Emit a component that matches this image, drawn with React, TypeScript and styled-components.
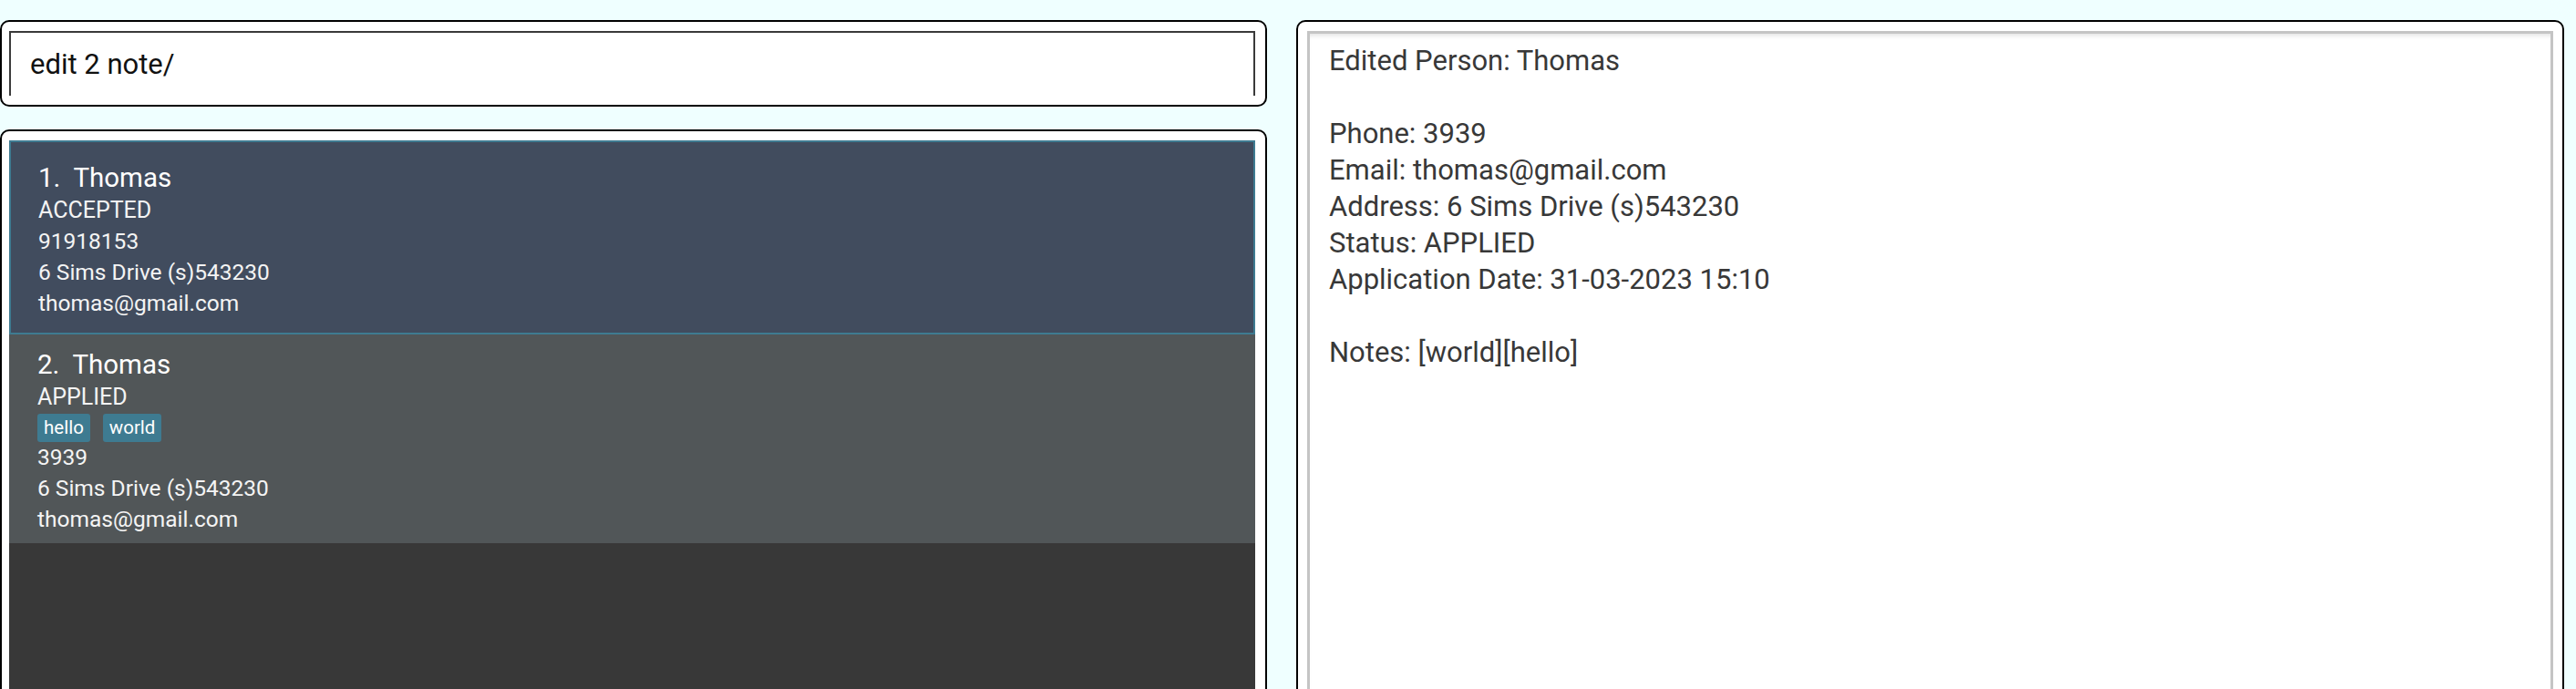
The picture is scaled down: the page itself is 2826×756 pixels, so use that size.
import React from "react";
import styled, { createGlobalStyle } from "styled-components";

const GlobalStyle = createGlobalStyle`
  html {
    overflow: hidden;
    background: #efffff;
  }
  body {
    margin: 0;
    padding: 0;
    background: #efffff;
    font-family: Roboto, "Liberation Sans", sans-serif;
  }
`;

const Page = styled.div`
  display: grid;
  grid-template-columns: 1390px 1391px;
  column-gap: 32px;
  align-items: start;
  padding-top: 22px;
`;

const LeftColumn = styled.div`
  display: flex;
  flex-direction: column;
  gap: 25px;
`;

const Frame = styled.div`
  background: #ffffff;
  border: 2px solid #000000;
  border-radius: 10px;
  padding: 10px 11px 10px 8px;
  box-sizing: border-box;
  display: flex;
  flex-direction: column;
  flex: none;
`;

const CommandFrame = styled(Frame)`
  height: 95px;
`;

const ListFrame = styled(Frame)`
  height: 700px;
`;

const ResultFrame = styled(Frame)`
  padding: 10px 10px 0 10px;
  height: 780px;
`;

const CommandField = styled.div`
  flex: 1;
  border: 2px solid #3a3a3a;
  border-bottom: none;
  display: flex;
  align-items: center;
  padding-left: 21px;
  font-size: 31px;
  color: #111111;
`;

const List = styled.div`
  flex: 1;
  background: #383838;
  display: flex;
  flex-direction: column;
`;

const Card = styled.div<{ $selected?: boolean; $tone: string }>`
  min-height: 213px;
  box-sizing: border-box;
  padding: 15px 0 9px ${(p) => (p.$selected ? 30 : 31)}px;
  background: ${(p) => p.$tone};
  border: ${(p) => (p.$selected ? "2px solid #3e7b91" : "none")};
  display: flex;
  flex-direction: column;
  justify-content: center;
  color: #ffffff;
`;

const Name = styled.div`
  font-size: 29.5px;
  line-height: 36px;
  white-space: pre;
`;

const Status = styled.div`
  font-size: 25px;
  line-height: 35px;
  color: #f4f4f4;
`;

const Detail = styled.div`
  font-size: 24.5px;
  line-height: 34px;
  color: #f4f4f4;
`;

const Tags = styled.div`
  display: flex;
  gap: 14px;
  height: 32px;
  align-items: center;
`;

const Tag = styled.span`
  background: #3e7b91;
  color: #ffffff;
  font-size: 20.5px;
  line-height: 31px;
  padding: 0 7px;
  border-radius: 3px;
`;

const ResultArea = styled.div`
  flex: 1;
  border: 3px solid #c4c4c4;
  border-bottom: none;
  box-shadow: inset 0 5px 5px -3px rgba(0, 0, 0, 0.12);
  padding: 10px 0 0 21px;
  font-size: 31px;
  line-height: 40px;
  color: #383838;
  white-space: pre-line;
`;

type Person = {
  name: string;
  status: string;
  tags: string[];
  phone: string;
  address: string;
  email: string;
  tone: string;
  selected?: boolean;
};

const people: Person[] = [
  {
    name: "Thomas",
    status: "ACCEPTED",
    tags: [],
    phone: "91918153",
    address: "6 Sims Drive (s)543230",
    email: "thomas@gmail.com",
    tone: "#414c5e",
    selected: true,
  },
  {
    name: "Thomas",
    status: "APPLIED",
    tags: ["hello", "world"],
    phone: "3939",
    address: "6 Sims Drive (s)543230",
    email: "thomas@gmail.com",
    tone: "#515658",
  },
];

const resultText = `Edited Person: Thomas

Phone: 3939
Email: thomas@gmail.com
Address: 6 Sims Drive (s)543230
Status: APPLIED
Application Date: 31-03-2023 15:10

Notes: [world][hello]`;

export default function App() {
  return (
    <>
      <GlobalStyle />
      <Page>
        <LeftColumn>
          <CommandFrame>
            <CommandField>edit 2 note/</CommandField>
          </CommandFrame>
          <ListFrame>
            <List>
              {people.map((p, i) => (
                <Card key={i} $selected={p.selected} $tone={p.tone}>
                  <Name>{`${i + 1}.  ${p.name}`}</Name>
                  <Status>{p.status}</Status>
                  {p.tags.length > 0 && (
                    <Tags>
                      {p.tags.map((t) => (
                        <Tag key={t}>{t}</Tag>
                      ))}
                    </Tags>
                  )}
                  <Detail>{p.phone}</Detail>
                  <Detail>{p.address}</Detail>
                  <Detail>{p.email}</Detail>
                </Card>
              ))}
            </List>
          </ListFrame>
        </LeftColumn>
        <ResultFrame>
          <ResultArea>{resultText}</ResultArea>
        </ResultFrame>
      </Page>
    </>
  );
}
